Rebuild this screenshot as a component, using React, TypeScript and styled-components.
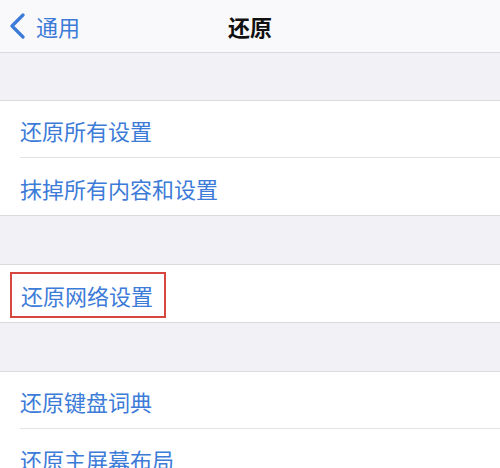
import styled, { createGlobalStyle } from 'styled-components'

// iOS 设置 > 通用 > 还原 页面
const GlobalStyle = createGlobalStyle`
    body {
        margin: 0;
        background: #f1f1f6;
        font-family: "Noto Sans CJK SC", "Noto Sans", sans-serif;
    }
`

const Page = styled.div`
    width: 500px;
    height: 468px;
    overflow: hidden;
    background: #f1f1f6;
`

const NavBar = styled.div`
    height: 52px;
    display: grid;
    grid-template-columns: 1fr auto 1fr;
    align-items: center;
    background: #f9f9fb;
    border-bottom: 1px solid #dadade;
`

const BackBtn = styled.div`
    display: flex;
    align-items: center;
    gap: 10px;
    padding-left: 9px;
    color: #3c7bd8;
    font-size: 22px;
    line-height: 1;
`

const Title = styled.div`
    font-size: 22px;
    font-weight: 700;
    color: #111;
    line-height: 1;
`

type GapProps = {
    h: number
}

const Gap = styled.div<GapProps>`
    height: ${props => props.h}px;
`

const Group = styled.div`
    background: #fff;
    border-top: 1px solid #dadade;
    border-bottom: 1px solid #dadade;
`

const Row = styled.div`
    padding-left: 20px;
    &:not(:last-child) > div {
        border-bottom: 1px solid #e2e2e6;
    }
`

const RowInner = styled.div`
    height: 57px;
    display: flex;
    align-items: center;
    color: #3c7bd8;
    font-size: 22px;
    line-height: 1;
    padding-top: 2px;
    box-sizing: border-box;
`

const Highlight = styled.span`
    display: inline-block;
    margin-left: -10px;
    padding: 10px 11px 10px 9px;
    border: 2px solid #d6453f;
    line-height: 22px;
`

const Chevron = () => (
    <svg width="17" height="26" viewBox="0 0 17 26">
        <path d="M14 2 L3 13 L14 24" fill="none" stroke="#3c7bd8" strokeWidth="3.2" strokeLinecap="round" strokeLinejoin="round" />
    </svg>
)

const App = () => {
    return (
        <Page>
            <GlobalStyle />
            <NavBar>
                <BackBtn>
                    <Chevron />
                    <span>通用</span>
                </BackBtn>
                <Title>还原</Title>
                <div />
            </NavBar>
            <Gap h={47} />
            <Group>
                <Row><RowInner>还原所有设置</RowInner></Row>
                <Row><RowInner>抹掉所有内容和设置</RowInner></Row>
            </Group>
            <Gap h={48} />
            <Group>
                <Row><RowInner><Highlight>还原网络设置</Highlight></RowInner></Row>
            </Group>
            <Gap h={48} />
            <Group>
                <Row><RowInner>还原键盘词典</RowInner></Row>
                <Row><RowInner>还原主屏幕布局</RowInner></Row>
            </Group>
        </Page>
    )
}

export default App
